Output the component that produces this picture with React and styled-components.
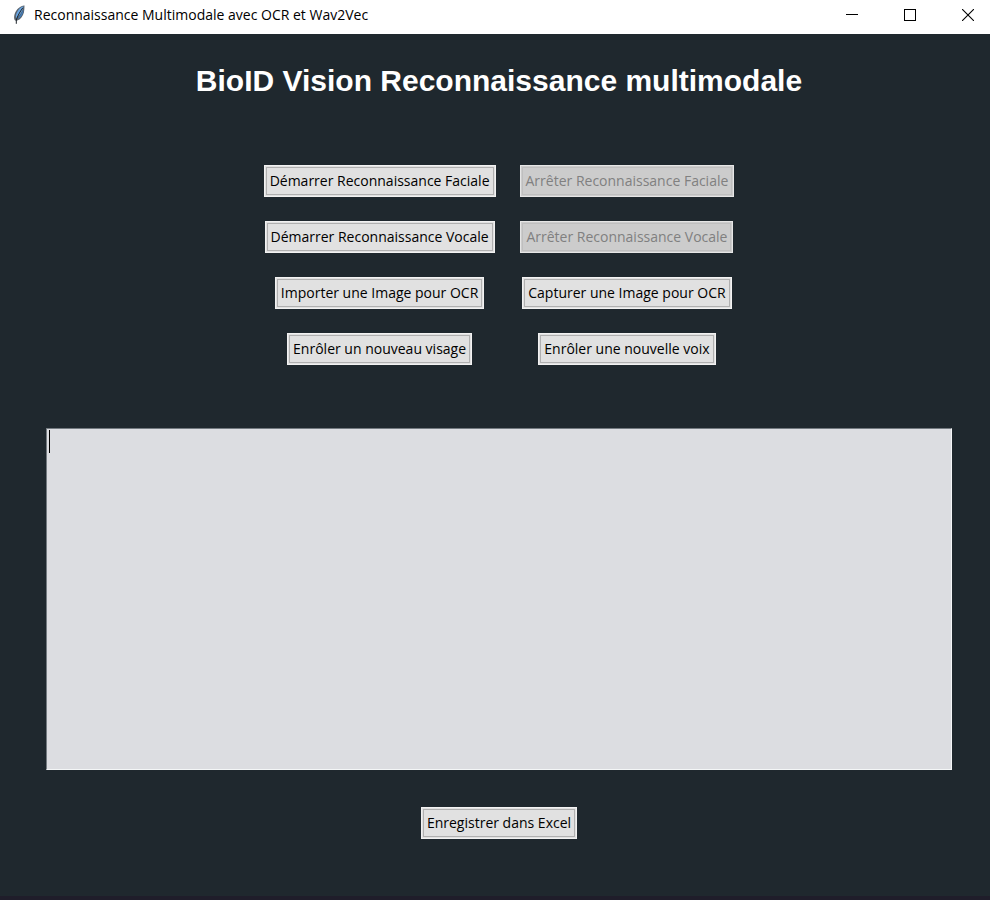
import React from "react";
import styled, { createGlobalStyle } from "styled-components";

const GlobalStyle = createGlobalStyle`
  * { box-sizing: border-box; }
  body { margin: 0; background: #1f282e; }
`;

const Window = styled.div`
  display: flex;
  flex-direction: column;
  min-height: 100vh;
  background: #1f282e;
  border-bottom: 4px solid #1f1d2a;
  font-family: "Open Sans", "Noto Sans", sans-serif;
`;

const TitleBar = styled.header`
  display: flex;
  align-items: center;
  height: 34px;
  padding: 0 0 4px 11px;
  background: #ffffff;
  color: #000000;
`;

const WindowTitle = styled.span`
  flex: 1;
  margin-left: 7px;
  font-size: 14px;
  line-height: 20px;
  white-space: nowrap;
`;

const WindowControls = styled.div`
  display: flex;
  gap: 30px;
  margin-right: 8px;
`;

const ControlButton = styled.button`
  display: flex;
  align-items: center;
  justify-content: center;
  width: 28px;
  height: 28px;
  padding: 0;
  border: 0;
  background: transparent;
  color: #000000;
`;

const Content = styled.main`
  display: flex;
  flex-direction: column;
  align-items: center;
  padding: 28px 38px 57px 46px;
`;

const Heading = styled.h1`
  margin: 0;
  color: #ffffff;
  font-family: "Liberation Sans", Arial, sans-serif;
  font-size: 30px;
  font-weight: 700;
  line-height: 38px;
  text-align: center;
`;

const ActionGrid = styled.div`
  display: grid;
  grid-template-columns: auto auto;
  justify-items: center;
  gap: 24px;
  margin-top: 65px;
`;

const ActionButton = styled.button`
  height: 32px;
  padding: 0 5px;
  border: 1px solid #f2f2f2;
  outline: 1px solid #b0b0b0;
  outline-offset: -3px;
  background: #e1e1e1;
  color: #000000;
  font-family: inherit;
  font-size: 14px;
  line-height: 20px;
  white-space: nowrap;

  &:disabled {
    border-color: #e6e6e6;
    outline-color: #bfbfbf;
    background: #cccccc;
    color: #808080;
  }
`;

const OutputFrame = styled.div`
  position: relative;
  align-self: stretch;
  margin: 63px 0 37px;
`;

const Output = styled.textarea`
  display: block;
  width: 100%;
  height: 342px;
  padding: 2px;
  border: 1px solid;
  border-color: #737a80 #f4f6f7 #f4f6f7 #737a80;
  border-radius: 0;
  outline: 0;
  resize: none;
  background: #dcdde1;
  color: #000000;
  font: 15px/22px "Liberation Mono", monospace;
`;

const Caret = styled.span`
  position: absolute;
  top: 2px;
  left: 3px;
  width: 1px;
  height: 23px;
  background: #000000;
`;

const actions = [
  { label: "Démarrer Reconnaissance Faciale" },
  { label: "Arrêter Reconnaissance Faciale", disabled: true },
  { label: "Démarrer Reconnaissance Vocale" },
  { label: "Arrêter Reconnaissance Vocale", disabled: true },
  { label: "Importer une Image pour OCR" },
  { label: "Capturer une Image pour OCR" },
  { label: "Enrôler un nouveau visage" },
  { label: "Enrôler une nouvelle voix" },
];

function FeatherIcon() {
  return (
    <svg width="16" height="20" viewBox="0 0 16 20" aria-hidden="true">
      <path d="M13.5 0.5C10 0.2 5.5 4 3.8 8.5C3 11 2.8 13 3.6 15L5.2 16L8.5 14.6C11.5 12 13.2 8.5 13.3 4.5Z" fill="#59636d" />
      <path d="M12.4 1.3C9 2.2 6 6 4.9 10.5L5 13.5C8.5 10.5 11.8 6.5 12.4 1.3Z" fill="#69a5e2" />
      <path d="M12.5 4.5C11 8 8.5 11.5 6.2 14C9.8 12.8 12.3 9 12.5 4.5Z" fill="#3d7dc2" />
      <path d="M11.8 2.8C8.8 7 6.5 11 5.3 15V18.8" fill="none" stroke="#20262c" strokeWidth="1" />
    </svg>
  );
}

export default function App() {
  return (
    <Window>
      <GlobalStyle />
      <TitleBar>
        <FeatherIcon />
        <WindowTitle>Reconnaissance Multimodale avec OCR et Wav2Vec</WindowTitle>
        <WindowControls>
          <ControlButton aria-label="Réduire">
            <svg width="12" height="12" shapeRendering="crispEdges"><path d="M0 5.5H12" stroke="currentColor" /></svg>
          </ControlButton>
          <ControlButton aria-label="Agrandir">
            <svg width="12" height="12" shapeRendering="crispEdges"><path d="M.5 .5H11.5V11.5H.5Z" fill="none" stroke="currentColor" /></svg>
          </ControlButton>
          <ControlButton aria-label="Fermer">
            <svg width="12" height="12"><path d="M0 0L12 12M12 0L0 12" stroke="currentColor" strokeWidth="1.1" /></svg>
          </ControlButton>
        </WindowControls>
      </TitleBar>
      <Content>
        <Heading>BioID Vision Reconnaissance multimodale</Heading>
        <ActionGrid>
          {actions.map(({ label, disabled }) => (
            <ActionButton key={label} type="button" disabled={disabled}>{label}</ActionButton>
          ))}
        </ActionGrid>
        <OutputFrame>
          <Output aria-label="Résultats" spellCheck={false} />
          <Caret aria-hidden="true" />
        </OutputFrame>
        <ActionButton type="button">Enregistrer dans Excel</ActionButton>
      </Content>
    </Window>
  );
}
